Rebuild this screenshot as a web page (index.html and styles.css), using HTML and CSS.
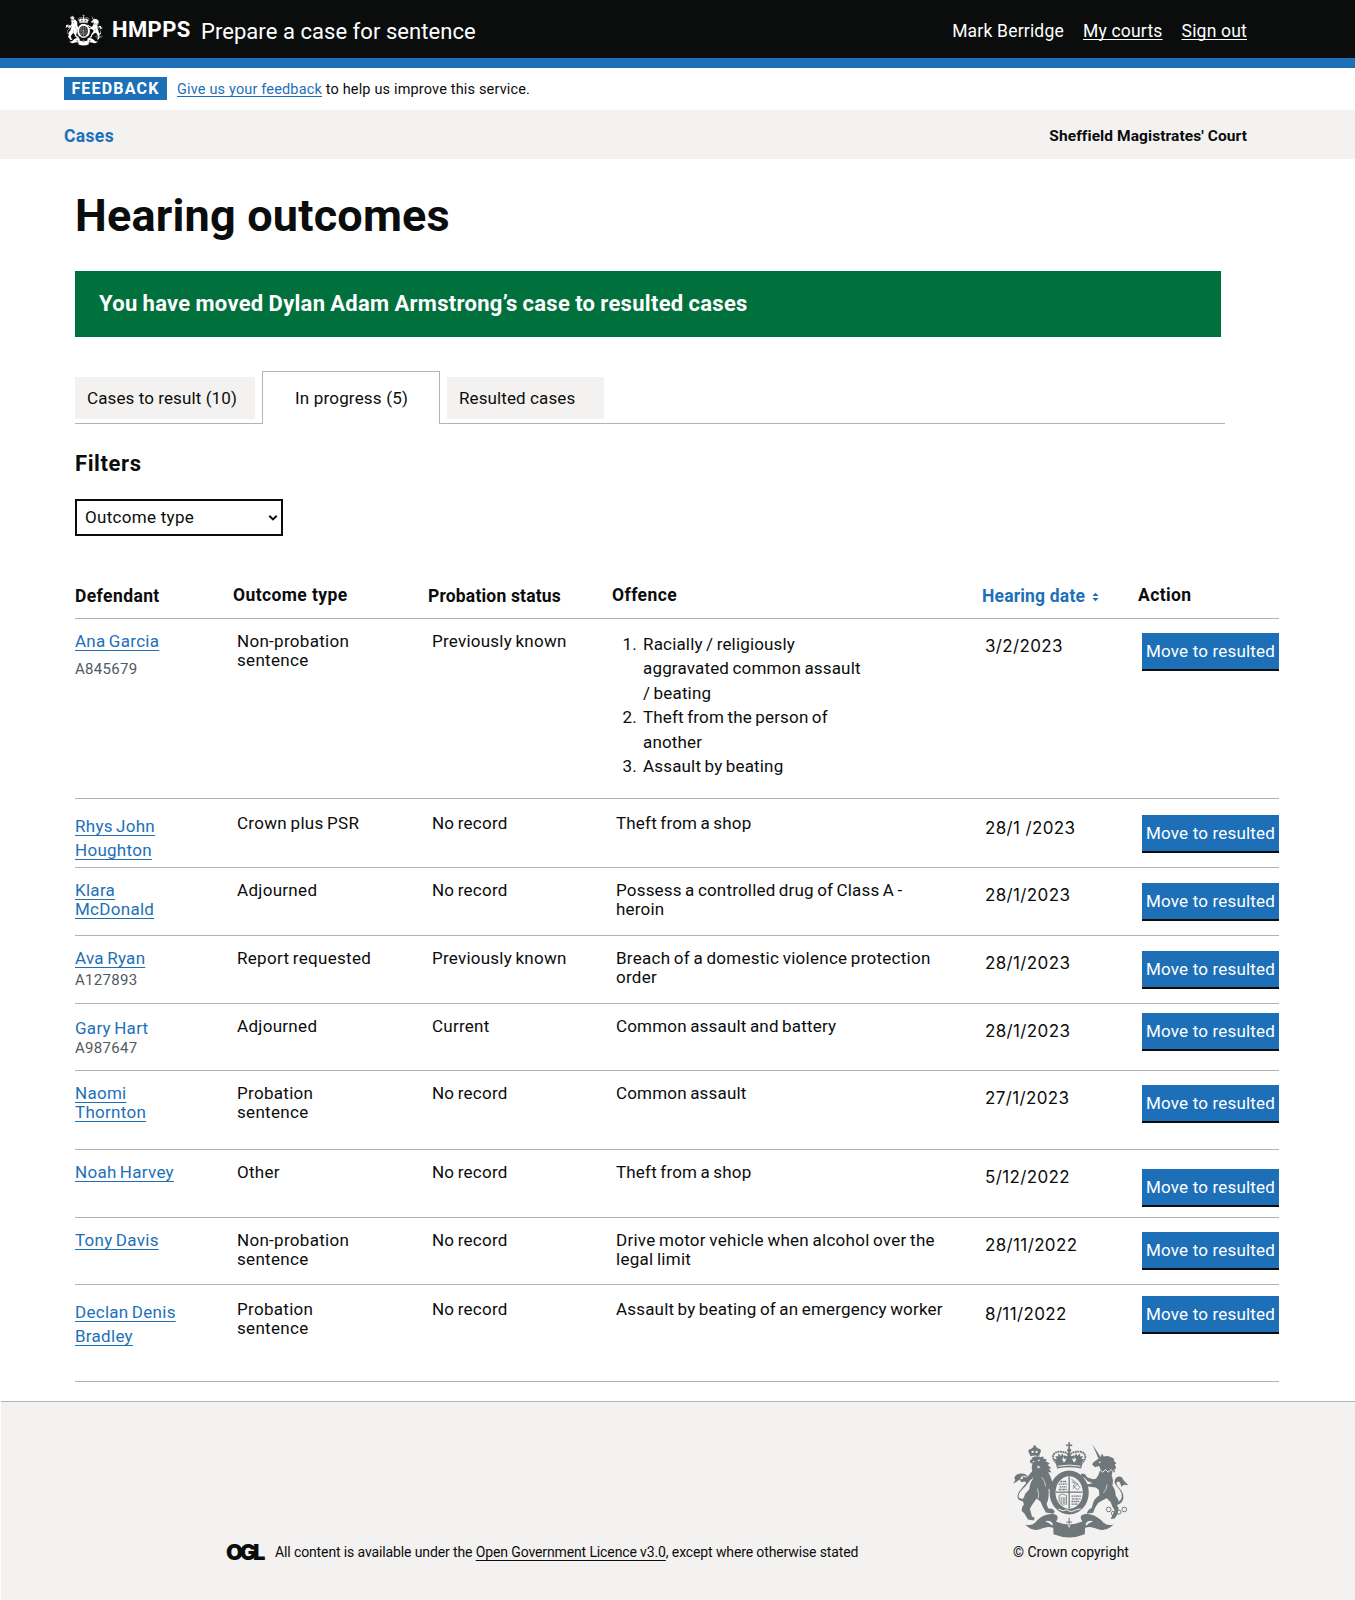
FILE: index.html
```html
<!DOCTYPE html>
<html lang="en">
<head>
<meta charset="utf-8">
<title>Hearing outcomes - Prepare a case for sentence</title>
<link rel="stylesheet" href="styles.css">
</head>
<body>
<svg class="defs" width="0" height="0" aria-hidden="true">
  <symbol id="crest" viewBox="36 34 352 290">
    <g fill="currentColor">
      <!-- royal crown -->
      <path d="M205 37h6l-1 7 7-1v6l-7-1 1 8h-6l1-8-7 1v-6l7 1z"/>
      <circle cx="208" cy="61" r="6"/>
      <path d="M172 101l-9-14h8l-5-9 9 2v-10l8 8 4-8 5 10-5 9 5 9zM244 101l9-14h-8l5-9-9 2v-10l-8 8-4-8-5 10 5 9-5 9zM193 99l7-13-8 1v-11l10 3 6-15 6 15 10-3v11l-8-1 7 13z"/>
      <path d="M168 101q40-11 80 0l-4 15q-36-8-72 0z"/>
      <path d="M171 101c-19-18-13-34 6-36 14 0 26 3 31 12 5-9 17-12 31-12 19 2 25 18 6 36" fill="none" stroke="currentColor" stroke-width="5.500" stroke-dasharray="6 1.500"/>
      <path d="M208 64v24" stroke="currentColor" stroke-width="5" stroke-dasharray="5 1.500"/>
      <!-- lion -->
      <path d="M92 79l-7-14q0-8 8-8 5-7 11-5 6-2 10 4 9 0 9 8l-6 15q-12-4-25 0z"/>
      <circle cx="104" cy="50" r="4"/>
      <path d="M94 84q13-8 28-3l9-1-1 6 11 3-4 5 13 7-7 4 12 10-8 1 8 12-10-2c8 14 12 26 14 43l-5-2 2 17-10-7c1 16 1 33-6 45l5 14 12 1 8 8-5 7-22-4-10-18-6-14-12-10c-9 14-15 20-20 31l6 23 8 4-2 8-18-3-10-17-9-9 2-12 5-7-4-12 8-20 12-14c2-16 6-25 14-36l-12 10-6 9-11-6-9 2-5-8 10-2-1-7 13 3 16-20c-3-8-1-16 1-22l-7-2-1-7 8-6z"/>
      <path d="M134 149l15-1 14 15 8 3-3 8-10-1-9-8-15-3z"/>
      <path d="M70 214c-18-1-23-16-10-32 11-15 25-24 21-38-4-11-20-7-20 4l-9 6-12 8 6-12-3-4c2-12 12-14 18-15 16-3 27 9 24 24-3 14-26 27-29 42-1 8 6 10 16 10z"/>
      <!-- unicorn -->
      <path d="M278 43l25 40-7 3z"/>
      <path d="M302 82l5-11 5 9q14-5 24 3l8 4-2 5 8 9-5 3 5 11-6 2 2 10-8-1-2 11c4 10 5 20 2 30 6 9 10 18 10 30l9 14-6 14 6 10-4 19-8 12-12 2 7-16 5-10-8-13-4-12-12-12c-10 5-20 9-27 16l-8 13-6 15-20 3 6-11 10-7 5-18c4-9 11-15 18-20l-2-16-9-7-23-3-8 5-10-9 6-6 11 3 15-3-15-6-11-11-11-2 3-10 10 1 8 11 17 5 9-1 8-14 5-16-4-9-12 4-9-8 4-7z"/>
      <path d="M344 219c18-2 27-15 20-32-6-14-25-25-18-38 5-10 14-11 21-6l6 10 13 13-13-1-8 6-3-9c-2-9-9-9-11-4-4 8 13 19 18 32 7 20-3 35-25 36z"/>
      <!-- garter -->
      <ellipse cx="208" cy="188" rx="59" ry="66"/>
      <!-- motto ribbon -->
      <path d="M76 284q18 6 30-6c12-14 31-27 53-25 20 2 15 17 9 22q39 17 80 0c-7-8-10-20 9-22 22-2 42 12 54 25q12 12 31 6l-9 8q-18 14-40 6c-13-5-21-9-37-4l-1 20q-47 19-94 0l-1-20c-17-5-25 0-38 4q-23 8-38-6z"/>
    </g>
    <g class="crest-cut">
      <ellipse cx="208" cy="188" rx="41" ry="49"/>
      <path d="M113 91l8-2-4 6zM97 94l7-1-3 5zM112 107l10 4-8 5zM296 96l8-1-4 5z"/>
      <circle cx="98" cy="66" r="3.500"/><circle cx="110" cy="66" r="3.500"/>
      <path d="M159 282q-8-13-23-7 12 2 21 13zM257 282q8-13 23-7-12 2-21 13z"/>
    </g>
    <g fill="none" class="crest-line" stroke-width="3">
      <path d="M300 119l9 8 8-8 9 8 8-8 8 8M174 109q34-7 68 0M176 238l13 5 11-3 14 6 13-5 16-4"/>
      <path d="M112 176q7 17 3 30M126 142q11 14 11 28M322 164q-2 17-11 25" stroke-width="2"/>
      <path d="M176 122q32-10 64 0" stroke-width="3"/>
    </g>
    <g fill="none" stroke="currentColor" stroke-width="3">
      <path d="M208 140v96M168 187h80" stroke-width="4"/>
      <path d="M176 163h26M179 171h22M177 179h25M181 155h20M216 207h26M215 199h28M215 215h24M215 223h18" stroke-width="4" stroke-dasharray="6 2 3 1"/>
      <path d="M215 148l14 10 11 15-7 7-13-11 6-9-10-4M219 177l15-17M177 197q10-9 23 0M178 197v18l13 14M200 197v28M184 202v18M190 202v22M195 202v24" stroke-width="2.4"/>
      <circle cx="327" cy="239" r="7"/><circle cx="342" cy="251" r="7"/><circle cx="358" cy="247" r="6"/><circle cx="374" cy="239" r="7"/>
    </g>
    <path class="crest-cut" d="M205 262l3-7 3 7 7 0v8l-5 1 9 0v11l-9 0-4 11h-2l-4-11-9 0v-11l9 0-5-1v-8z"/>
    <path d="M208 264v24M199 277h18" stroke="currentColor" stroke-width="3"/>
  </symbol>
</svg>

<header class="masthead">
  <svg class="masthead-crest" aria-hidden="true"><use href="#crest"/></svg>
  <span class="org">HMPPS</span>
  <span class="service">Prepare a case for sentence</span>
  <nav class="account">
    <span class="user">Mark Berridge</span>
    <a class="courts" href="#">My courts</a>
    <a class="signout" href="#">Sign out</a>
  </nav>
</header>

<div class="phase">
  <strong class="tag">FEEDBACK</strong>
  <p><a href="#">Give us your feedback</a> to help us improve this service.</p>
</div>

<div class="subnav">
  <a href="#">Cases</a>
  <strong>Sheffield Magistrates' Court</strong>
</div>

<main>
  <h1>Hearing outcomes</h1>
  <div class="banner">You have moved Dylan Adam Armstrong’s case to resulted cases</div>

  <div class="tabs">
    <a class="tab tab-todo" href="#">Cases to result (10)</a>
    <a class="tab tab-active" href="#">In progress (5)</a>
    <a class="tab tab-done" href="#">Resulted cases</a>
  </div>

  <h2>Filters</h2>
  <div class="select"><span>Outcome type</span>
    <svg width="10" height="8" viewBox="0 0 10 8"><path d="M1.3 1.8L5 5.4 8.7 1.8" fill="none" stroke="#0b0c0c" stroke-width="2"/></svg>
  </div>

  <div class="table">
    <div class="head">
      <span class="low">Defendant</span><span>Outcome type</span><span class="low h-prob">Probation status</span><span>Offence</span>
      <span class="low sort">Hearing date<svg width="7" height="10" viewBox="0 0 7 10"><path d="M3.5 .7L6.600 4H.4zM3.500 9.300L.4 6h6.200z" fill="#1d70b8"/></svg></span><span>Action</span>
    </div>
    <div class="row r1">
      <div class="name"><a href="#">Ana Garcia</a><small>A845679</small></div>
      <div class="outcome">Non-probation<br>sentence</div><div class="status">Previously known</div>
      <ol><li>Racially / religiously<br>aggravated common assault<br>/ beating</li><li>Theft from the person of<br>another</li><li>Assault by beating</li></ol>
      <div class="date">3/2/2023</div><button>Move to resulted</button>
    </div>
    <div class="row r2">
      <div class="name loose"><a href="#">Rhys John<br>Houghton</a></div>
      <div class="outcome">Crown plus PSR</div><div class="status">No record</div><div class="offence">Theft from a shop</div>
      <div class="date">28/1 /2023</div><button>Move to resulted</button>
    </div>
    <div class="row r3">
      <div class="name"><a href="#">Klara<br>McDonald</a></div>
      <div class="outcome">Adjourned</div><div class="status">No record</div><div class="offence">Possess a controlled drug of Class A -<br>heroin</div>
      <div class="date">28/1/2023</div><button>Move to resulted</button>
    </div>
    <div class="row r4">
      <div class="name"><a href="#">Ava Ryan</a><small>A127893</small></div>
      <div class="outcome">Report requested</div><div class="status">Previously known</div><div class="offence wide">Breach of a domestic violence protection<br>order</div>
      <div class="date">28/1/2023</div><button>Move to resulted</button>
    </div>
    <div class="row r5">
      <div class="name"><a class="plain" href="#">Gary Hart</a><small>A987647</small></div>
      <div class="outcome">Adjourned</div><div class="status">Current</div><div class="offence">Common assault and battery</div>
      <div class="date">28/1/2023</div><button>Move to resulted</button>
    </div>
    <div class="row r6">
      <div class="name"><a href="#">Naomi<br>Thornton</a></div>
      <div class="outcome">Probation<br>sentence</div><div class="status">No record</div><div class="offence">Common assault</div>
      <div class="date">27/1/2023</div><button>Move to resulted</button>
    </div>
    <div class="row r7">
      <div class="name"><a href="#">Noah Harvey</a></div>
      <div class="outcome">Other</div><div class="status">No record</div><div class="offence">Theft from a shop</div>
      <div class="date">5/12/2022</div><button>Move to resulted</button>
    </div>
    <div class="row r8">
      <div class="name"><a href="#">Tony Davis</a></div>
      <div class="outcome">Non-probation<br>sentence</div><div class="status">No record</div><div class="offence wide">Drive motor vehicle when alcohol over the<br>legal limit</div>
      <div class="date">28/11/2022</div><button>Move to resulted</button>
    </div>
    <div class="row r9">
      <div class="name loose"><a href="#">Declan Denis<br>Bradley</a></div>
      <div class="outcome">Probation<br>sentence</div><div class="status">No record</div><div class="offence">Assault by beating of an emergency worker</div>
      <div class="date">8/11/2022</div><button>Move to resulted</button>
    </div>
  </div>
</main>

<footer>
  <span class="ogl">OGL</span>
  <p class="licence">All content is available under the <a href="#">Open Government Licence v3.0</a>, except where otherwise stated</p>
  <div class="copyright">
    <svg class="footer-crest" aria-hidden="true"><use href="#crest"/></svg>
    <span>© Crown copyright</span>
  </div>
</footer>
</body>
</html>
```
FILE: styles.css
```css
* { box-sizing: border-box; }
body {
  margin: 0;
  min-height: 1600px;
  display: flex;
  flex-direction: column;
  background: #fff;
  color: #0b0c0c;
  font: 17px/19px Roboto, "Liberation Sans", sans-serif;
  letter-spacing: .2px;
}
p, h1, h2, ol { margin: 0; padding: 0; }
a { color: #1d70b8; text-decoration: underline; text-decoration-thickness: 1px; text-decoration-skip-ink: none; text-underline-offset: 3px; }
.defs { position: absolute; }
.crest-cut { fill: var(--ground); }
.crest-line { stroke: var(--ground); }

.masthead {
  --ground: #0b0c0c;
  height: 68px;
  padding: 0 108px 0 65px;
  display: flex;
  align-items: flex-start;
  background: #0b0c0c;
  border-bottom: 10px solid #1d70b8;
  color: #fff;
  white-space: nowrap;
}
.masthead-crest { width: 38px; height: 32px; margin: 14px 9px 0 0; }
.org { font: bold 22px/26px Roboto, sans-serif; padding-top: 17px; width: 89px; letter-spacing: .4px; }
.service { font-size: 22px; line-height: 26px; padding-top: 19px; letter-spacing: .05px; }
.account { margin-left: auto; display: flex; gap: 19px; padding-top: 21px; font-size: 17.500px; line-height: 20px; }
.account a { color: #fff; text-underline-offset: 2px; }

.phase { height: 42px; padding: 9px 0 0 64px; display: flex; font-size: 14.500px; line-height: 26px; letter-spacing: .16px; }
.tag { width: 103px; height: 23px; margin-right: 10px; background: #1d70b8; color: #fff; text-align: center; font-size: 16px; line-height: 23px; letter-spacing: 1.200px; }
.phase a { text-underline-offset: 2px; }

.subnav { height: 49px; padding: 0 108px 0 64px; display: flex; justify-content: space-between; background: #f3f2f1; font-size: 15.500px; line-height: 52px; letter-spacing: .08px; }
.subnav a { font-size: 17.500px; line-height: 53px; font-weight: bold; letter-spacing: .35px; text-decoration: none; }

main { padding: 32px 0 0 75px; height: 1242px; }
h1 { font-size: 45px; line-height: 50px; letter-spacing: .2px; }
.banner { width: 1146px; height: 66px; margin-top: 30px; padding-left: 24px; background: #00703c; color: #fff; font-size: 22px; line-height: 65px; font-weight: bold; letter-spacing: .28px; word-spacing: -.700px; }

.tabs { width: 1150px; height: 53px; margin-top: 34px; display: flex; align-items: flex-start; border-bottom: 1px solid #b1b4b6; }
.tab { height: 42px; margin-top: 6px; padding-left: 12px; background: #f3f2f1; color: #0b0c0c; line-height: 42px; letter-spacing: .1px; text-decoration: none; }
.tab-todo { width: 180px; margin-right: 7px; }
.tab-active { width: 178px; height: 53px; margin: 0 7px 0 0; padding: 5px 0 0 32px; background: #fff; border: 1px solid #b1b4b6; border-bottom: 0; letter-spacing: .18px; }
.tab-done { width: 157px; }

h2 { margin-top: 27px; font-size: 22px; line-height: 26px; letter-spacing: .6px; }
.select { width: 208px; height: 37px; margin-top: 22px; padding: 0 3px 0 8px; display: flex; justify-content: space-between; align-items: center; border: 2px solid #0b0c0c; letter-spacing: .3px; }

.table { width: 1204px; margin-top: 50px; }
.head { height: 33px; display: grid; grid-template-columns: 158px 195px 184px 370px 156px auto; border-bottom: 1px solid #b1b4b6; font-size: 17.500px; font-weight: bold; line-height: 19px; letter-spacing: .4px; white-space: nowrap; }
.low { padding-top: 1px; }
.h-prob { letter-spacing: .18px; }
.sort { color: #1d70b8; letter-spacing: .18px; }
.sort svg { margin-left: 7px; }
.row { display: grid; grid-template-columns: 162px 195px 184px 370px 156px 137px; align-items: start; border-bottom: 1px solid #b1b4b6; padding-top: 13px; white-space: nowrap; }
.name { letter-spacing: .28px; word-spacing: -1.200px; }
.name small { display: block; color: #505a5f; font-size: 15px; line-height: 19px; letter-spacing: .3px; }
.outcome { letter-spacing: .3px; word-spacing: -1px; }
.status, .offence, .row ol { word-spacing: -1px; }
.status { letter-spacing: .24px; }
.offence { letter-spacing: .18px; }
.offence.wide { letter-spacing: .27px; }
.loose { line-height: 24.400px; }
.plain { text-decoration: none; }
.date { padding-top: 5px; margin-left: -1px; font-family: Inter, Roboto, sans-serif; font-size: 17px; letter-spacing: .36px; }
.row button { height: 38px; margin: var(--button, 2px) 0 0; padding: 0; border: 0; border-bottom: 2px solid #0b0c0c; background: #1d70b8; color: #fff; font: inherit; line-height: 35px; letter-spacing: .17px; }
.row ol { list-style: none; counter-reset: n; line-height: 24.400px; }
.row li { display: grid; grid-template-columns: 21px auto; column-gap: 6px; counter-increment: n; letter-spacing: .17px; }
.row li::before { content: counter(n) "."; text-align: right; }
.r1 { height: 180px; --button: 1px; }
.r1 small { margin-top: 9px; }
.r2 { height: 69px; padding-top: 15px; --button: 1px; }
.r3 { height: 68px; }
.r4 { height: 68px; }
.r4 small { margin-top: 3px; }
.r5 { height: 67px; --button: -4px; }
.r5 .name { padding-top: 2px; }
.r5 small { margin-top: 1px; }
.r6 { height: 79px; --button: 1px; }
.r7 { height: 68px; --button: 6px; }
.r8 { height: 67px; --button: 1px; }
.r9 { height: 97px; padding-top: 15px; --button: -4px; }

footer { --ground: #f3f2f1; flex: 1; margin-left: 1px; padding-left: 225px; display: flex; align-items: flex-start; background: #f3f2f1; border-top: 1px solid #b1b4b6; font-size: 14px; letter-spacing: 0; white-space: nowrap; }
.ogl { width: 49px; margin-top: 139px; font: 900 22px/22px Inter, sans-serif; letter-spacing: -3.300px; }
.licence { width: 738px; padding-top: 141px; letter-spacing: -.12px; }
.licence a { color: inherit; text-underline-offset: 3px; }
.footer-crest { display: block; width: 117px; height: 97px; margin: 39px 0 5px -1px; color: #6f777b; }
```
